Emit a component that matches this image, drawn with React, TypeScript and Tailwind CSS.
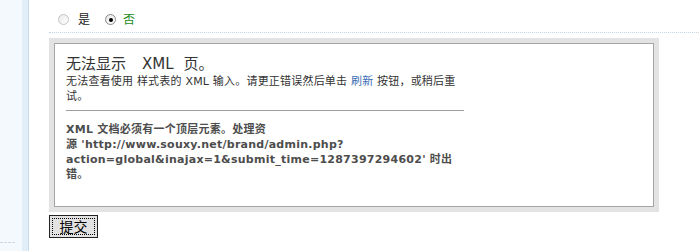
import React from 'react';

const Radio = ({ checked }: { checked?: boolean }) => (
  <span
    className={`flex h-[11px] w-[11px] items-center justify-center rounded-full border bg-gradient-to-br from-[#e8e8e8] to-white ${
      checked ? 'border-[#8a8a8a]' : 'border-[#c4c4c4]'
    }`}
  >
    {checked && <span className="h-[4px] w-[4px] rounded-full bg-black" />}
  </span>
);

const App = () => {
  return (
    <div
      className="flex h-[251px] w-[699px] overflow-hidden bg-white text-[#333]"
      style={{ fontFamily: '"DejaVu Sans", Verdana, "Noto Sans CJK SC", sans-serif' }}
    >
      {/* sidebar edge */}
      <div className="flex w-[22px] shrink-0 flex-col justify-end bg-[#f3f9fd] pb-[8px]">
        <div className="w-[15px] border-t border-dashed border-[#cfd8e0]" />
      </div>
      <div className="w-[6px] shrink-0 bg-[#e3eff8]" />
      <div className="w-px shrink-0 bg-[#c9dcec]" />

      <div className="min-w-0 flex-1 pl-[20px]">
        {/* radio row */}
        <div className="flex h-[33px] items-center border-b border-dotted border-[#c6d4e2] pt-[7px] text-[12px]">
          <span className="ml-[9px]">
            <Radio />
          </span>
          <span className="ml-[9px] text-[#222]">是</span>
          <span className="ml-[15px]">
            <Radio checked />
          </span>
          <span className="ml-[7px] text-[#1c8a1c]">否</span>
        </div>

        {/* xml error box */}
        <div className="mt-[5px] h-[174px] w-[610px] bg-[#e3e3e3] p-[5px]">
          <div className="h-full border border-[#a5a5a5] bg-white pl-[11px] pt-[11px]">
            <div className="w-[398px]">
              <div className="text-[15px] leading-[19px] text-[#333]">
                无法显示<span className="ml-[16px]">XML</span>
                <span className="ml-[10px]">页。</span>
              </div>
              <div className="whitespace-nowrap text-[11px] leading-[15px] tracking-[0.2px] text-[#333]">
                无法查看使用 样式表的 XML 输入。请更正错误然后单击{' '}
                <span className="text-[#3a6db5]">刷新</span> 按钮，或稍后重
                <br />
                试。
              </div>
              <div className="mt-[6px] h-px bg-[#9e9e9e]" />
              <div className="mt-[11px] whitespace-nowrap text-[11px] font-bold leading-[15px] tracking-[0.25px] text-[#4d4d4d]">
                XML 文档必须有一个顶层元素。处理资
                <br />
                源 'http://www.souxy.net/brand/admin.php?
                <br />
                action=global&amp;inajax=1&amp;submit_time=1287397294602' 时出
                <br />
                错。
              </div>
            </div>
          </div>
        </div>

        {/* submit */}
        <button className="mt-[3px] flex h-[23px] w-[49px] items-center justify-center border border-[#222] bg-[#e2e2e2] p-[2px]">
          <span className="flex h-full w-full items-center justify-center border border-dotted border-black text-[14px] leading-none text-black">
            提交
          </span>
        </button>
      </div>
    </div>
  );
};

export default App;
